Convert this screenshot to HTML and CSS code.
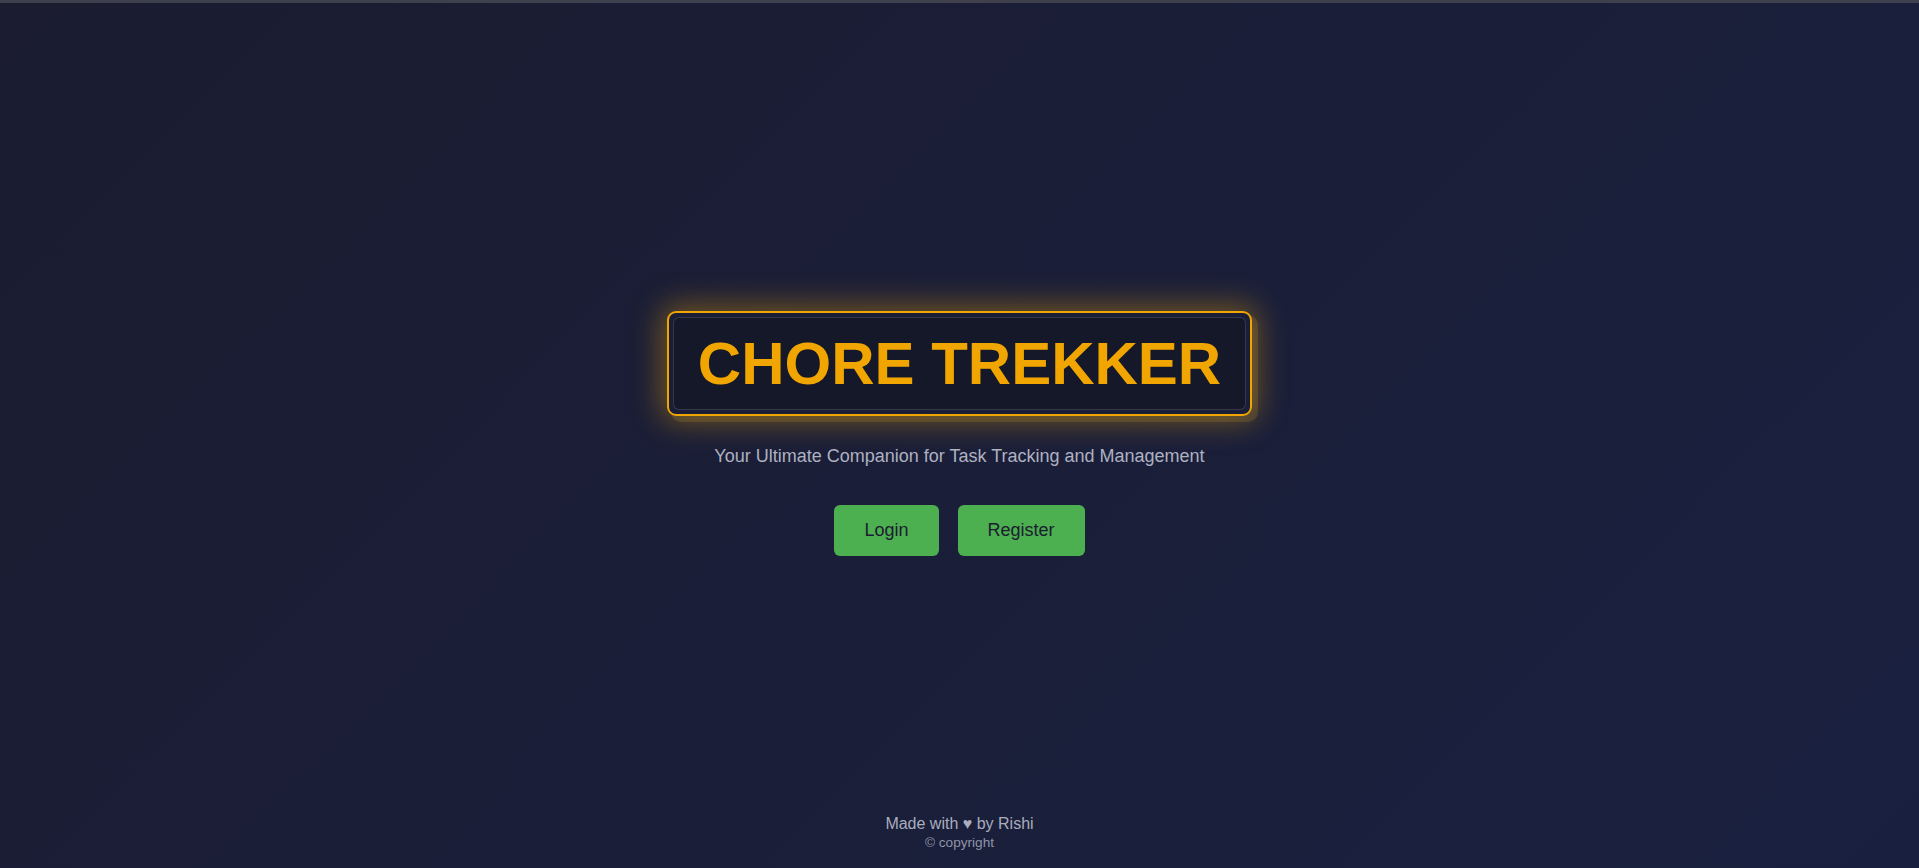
FILE: index.html
```html
<!DOCTYPE html>
<html lang="en">
<head>
<meta charset="utf-8">
<title>Chore Trekker</title>
<link rel="stylesheet" href="styles.css">
</head>
<body>
<div class="topbar"></div>
<main class="hero">
  <div class="title-frame">
    <h1 class="title">CHORE TREKKER</h1>
  </div>
  <p class="tagline">Your Ultimate Companion for Task Tracking and Management</p>
  <div class="actions">
    <a class="btn" href="#">Login</a>
    <a class="btn" href="#">Register</a>
  </div>
</main>
<footer class="footer">
  <p class="made">Made with &#9829; by Rishi</p>
  <p class="copy">&copy; copyright</p>
</footer>
</body>
</html>
```
FILE: styles.css
```css
* { box-sizing: border-box; }
html, body { margin: 0; padding: 0; }
body {
  height: 100vh;
  display: flex;
  flex-direction: column;
  font-family: "Liberation Sans", Arial, sans-serif;
  background: linear-gradient(135deg, #1b1c30 0%, #1a1e38 50%, #19203f 100%);
  color: #b4b7c6;
  overflow: hidden;
}
.topbar {
  height: 3px;
  background: #3e404e;
  flex: none;
}
.hero {
  flex: 1;
  display: flex;
  flex-direction: column;
  align-items: center;
  justify-content: center;
  padding-top: 49px;
}
.title-frame {
  border: 2px solid #f0a500;
  border-radius: 9px;
  padding: 4px;
  box-shadow: 0 0 30px 6px rgba(240, 165, 0, 0.4), 5px 5px 0 1px rgba(110, 95, 60, 0.35);
}
.title {
  margin: 0;
  background: #141829;
  border: 1px solid rgba(255, 255, 255, 0.14);
  border-radius: 6px;
  color: #f0a500;
  font-size: 60px;
  font-weight: bold;
  line-height: 91px;
  padding: 0 24px;
  white-space: nowrap;
}
.tagline {
  margin: 29px 0 0;
  font-size: 18px;
  line-height: 22px;
  color: #aeb1c0;
}
.actions {
  display: flex;
  gap: 19px;
  margin-top: 38px;
}
.btn {
  display: block;
  background: #4caf50;
  color: #1b1d30;
  text-decoration: none;
  font-size: 18px;
  line-height: 21px;
  padding: 15px 30px;
  border-radius: 6px;
}
.footer {
  flex: none;
  text-align: center;
  padding-bottom: 16px;
}
.made {
  margin: 0;
  font-size: 16px;
  line-height: 20px;
  color: #a9adbd;
}
.copy {
  margin: 0;
  font-size: 13.6px;
  line-height: 18px;
  color: #8f94a8;
}
```
